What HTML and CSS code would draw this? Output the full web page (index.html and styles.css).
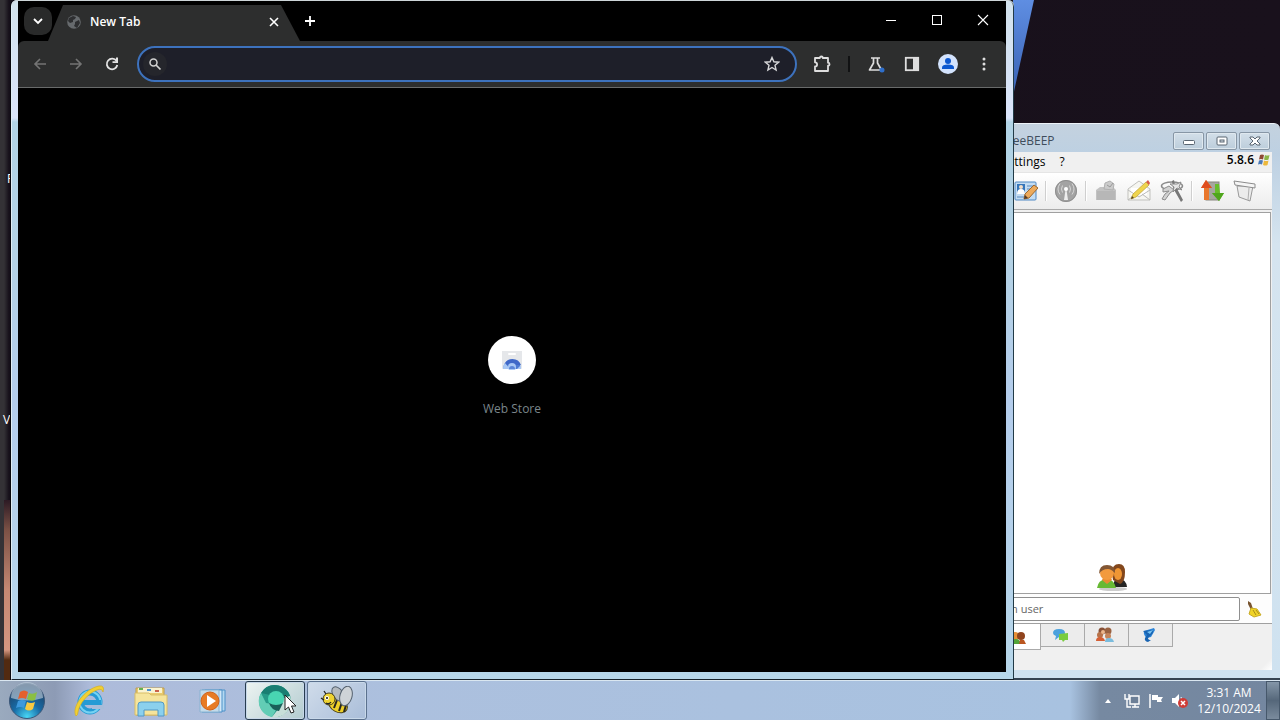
FILE: index.html
```html
<!DOCTYPE html>
<html lang="en">
<head>
<meta charset="utf-8">
<title>Desktop</title>
<link rel="stylesheet" href="styles.css">
</head>
<body>
<main class="desktop">
  <div class="glow-left"></div>
  <div class="glow-right"></div>
  <span class="shortcut shortcut-first">F</span>
  <span class="shortcut shortcut-second">V</span>

  <section class="messenger" aria-label="BeeBEEP">
    <header class="messenger-title">
      <span class="messenger-name">BeeBEEP</span>
      <div class="caption-buttons">
        <button class="caption" aria-label="Minimize"><svg width="14" height="10" viewBox="0 0 14 10"><rect x="1.500" y="4.500" width="11" height="4" rx="1" fill="#fff" stroke="#596571"/></svg></button>
        <button class="caption" aria-label="Maximize"><svg width="14" height="10" viewBox="0 0 14 10"><rect x="2" y="1" width="10" height="8" rx="1" fill="#fff" stroke="#596571"/><rect x="5" y="4" width="4" height="2" fill="#dbe4ec" stroke="#596571"/></svg></button>
        <button class="caption" aria-label="Close"><svg width="14" height="10" viewBox="0 0 14 10"><path d="M2 1h3l2 2 2-2h3v1L9 5l3 3v1H9L7 7 5 9H2V8l3-3-3-3z" fill="#fff" stroke="#596571"/></svg></button>
      </div>
    </header>
    <div class="messenger-body">
      <nav class="menu-bar">
        <button class="menu-item">Settings</button>
        <button class="menu-item">?</button>
        <span class="version">5.8.6</span>
        <svg class="flag" width="12" height="12" viewBox="0 0 12 12"><path d="M2 1q2-1 4 0L5 5.500q-2-1-4 0z" fill="#8e4a35"/><path d="M7 1q2 1 4.500 0l-1 4.500q-2 1-4.500 0z" fill="#8bb548"/><path d="M1 6.500q2-1 4 0l-1 4q-2-1-4 0z" fill="#4b79b8"/><path d="M6 6.500q2 1 4.500 0l-1 4.500q-2 1-4.500 0z" fill="#edb83b"/></svg>
      </nav>
      <div class="tool-bar">
        <button class="tool" aria-label="Edit profile"><svg width="24" height="24" viewBox="0 0 24 24"><rect x="1" y="3" width="21" height="18" rx="1" fill="#c3dcf2" stroke="#4e88c3"/><rect x="3" y="5" width="8" height="10" fill="#3475ba"/><circle cx="7" cy="8" r="2" fill="#f2ddc6"/><path d="M3 15q0-5 4-5t4 5z" fill="#fff"/><path d="M13 7h8M13 10h5M3 18h9" stroke="#5b8bc0"/><path d="M10 20l1-5 9-9 4 3-9 10z" fill="#edaa5b" stroke="#9c6930"/><path d="M10 20l1-4 3 3z" fill="#543b27"/></svg></button>
        <i class="separator"></i>
        <button class="tool" aria-label="Broadcast to network"><svg width="24" height="24" viewBox="0 0 24 24"><circle cx="12" cy="12" r="11" fill="#a3a3a3"/><circle cx="12" cy="12" r="10.500" fill="none" stroke="#8f8f8f"/><path d="M11.500 11h1l1.500 10h-4z" fill="#eee"/><circle cx="12" cy="10" r="2" fill="#fff"/><path d="M8.500 13.500q-2-3.500 0-7M15.500 13.500q2-3.500 0-7M6 15.500q-4-5.500 0-11M18 15.500q4-5.500 0-11" fill="none" stroke="#d6d6d6"/></svg></button>
        <i class="separator"></i>
        <button class="tool" aria-label="Save"><svg width="24" height="24" viewBox="0 0 24 24"><path d="M2 11l4-3h13l3 3v10H2z" fill="#c2c2c2"/><path d="M3 12h18v9H3z" fill="#b7b7b7"/><path d="M10 10l1-6 5-2 4 3-1 6z" fill="#cbcbcb" stroke="#b0b0b0"/><path d="M13 6l3 2 3-4" stroke="#999" fill="none"/></svg></button>
        <button class="tool" aria-label="Write message"><svg width="24" height="24" viewBox="0 0 24 24"><path d="M1 10L12 2l11 8v11H1z" fill="#f6f6f1" stroke="#c1c1bd"/><path d="M4 9h16v7H4z" fill="#fff"/><path d="M1 11l11 7 11-7M1 21l8-6M23 21l-8-6" fill="none" stroke="#bbb"/><path d="M4 20l2-5L19 3l3 3-13 12z" fill="#efd44e" stroke="#bba035" stroke-width=".7"/><path d="M19 3l2-2 2 3-1 2z" fill="#d75a49"/><path d="M4 20l1-3 2 2z" fill="#554328"/></svg></button>
        <button class="tool" aria-label="Tools"><svg width="24" height="24" viewBox="0 0 24 24"><ellipse cx="12" cy="7" rx="10.500" ry="4" fill="none" stroke="#8b8b8b" stroke-width="1.500"/><path d="M12 2l2-1 1 5 8 15-2 2-8-14z" fill="#777"/><path d="M3 10l6-3 5 4-4 3-5 7-3-1 3-5 4-3-6 1z" fill="#d2d2d2" stroke="#8d8d8d"/><path d="M17 5l4-2-2 5 3 3-5-2-4 4 1-5-4-3z" fill="#e5e5e5" stroke="#8b8b8b"/></svg></button>
        <i class="separator"></i>
        <button class="tool" aria-label="File transfers"><svg width="24" height="24" viewBox="0 0 24 24"><rect x="6" y="3" width="13" height="18" fill="#a6a6a0" stroke="#85847c"/><path d="M4 21V9H1l5-8 6 8H9v12z" fill="#e9772c"/><path d="M1 9l5-8 6 8z" fill="#df4d1d"/><path d="M15 5h4l1 9h4l-5 8-7-8h3z" fill="#68bd2b"/><path d="M12 14h12l-5 8z" fill="#4fa51d"/></svg></button>
        <button class="tool" aria-label="Bin"><svg width="24" height="24" viewBox="0 0 24 24"><path d="M4 7l2 11 11 4 3-15z" fill="#ececec" stroke="#999"/><path d="M1 2l21 3v4L2 6z" fill="#f5f5f5" stroke="#8c8c8c"/><path d="M16 9l-1 12" stroke="#b0b0b0"/></svg></button>
      </div>
      <div class="user-list">
        <svg width="32" height="28" viewBox="0 0 32 28"><ellipse cx="17" cy="26" rx="14" ry="2" fill="#ccc"/><path d="M17 24q0-8 6-8 7 0 8 8z" fill="#252525"/><path d="M16 10q0-9 7-9 6 0 6 8 0 10-5 12l-7-4z" fill="#83471c"/><ellipse cx="22" cy="11" rx="4" ry="6" fill="#ef9634"/><path d="M1 25q1-8 9-9 8 0 10 9z" fill="#67b934"/><path d="M6 17l5 4 5-4-2-4H8z" fill="#e88b32"/><circle cx="11" cy="10" r="7" fill="#f29a3e"/><path d="M3 11q0-9 8-9 8 0 8 8-4-4-7-4-6 0-9 5z" fill="#835734"/></svg>
      </div>
      <div class="search-row">
        <input class="user-search" type="text" placeholder="Search user" aria-label="Search user">
        <button class="clear" aria-label="Clear search"><svg width="16" height="18" viewBox="0 0 16 18"><path d="M2 1l3 2 2 6-2 1-3-6z" fill="#78542f"/><path d="M5 8l6 1 4 6-7 2-5-3z" fill="#f0d326" stroke="#c8aa24"/><path d="M7 10l3 5M10 10l3 4" stroke="#a98d18"/></svg></button>
      </div>
      <div class="tabs">
        <button class="side-tab active" aria-label="Users"><svg width="16" height="14" viewBox="0 0 16 14"><circle cx="5" cy="6" r="4" fill="#e79038"/><circle cx="11" cy="6" r="4" fill="#90441d"/><path d="M1 14q1-5 5-5t5 5z" fill="#52a338"/><path d="M9 14l1-4h4l2 4z" fill="#ba5620"/></svg></button>
        <button class="side-tab" aria-label="Chats"><svg width="16" height="14" viewBox="0 0 16 14"><path d="M0 5q0-4 6-4t6 4q0 4-6 4l-4 3 1-4q-3-1-3-3" fill="#4ba1dd"/><path d="M6 6l9-1v7h-3l-2 2-1-2H6z" fill="#79cc40"/></svg></button>
        <button class="side-tab" aria-label="Groups"><svg width="18" height="16" viewBox="0 0 18 16"><circle cx="6" cy="4" r="3.500" fill="#885137"/><circle cx="12" cy="4" r="3.500" fill="#996140"/><circle cx="4" cy="8" r="3" fill="#b7724a"/><circle cx="12" cy="9" r="3" fill="#c5845b"/><circle cx="7" cy="5" r="2" fill="#edb68b"/><path d="M0 14q0-4 4-4t5 4z" fill="#d55f35"/><path d="M9 15q0-4 4-4t5 4z" fill="#7bbcdd"/></svg></button>
        <button class="side-tab" aria-label="Files"><svg width="16" height="16" viewBox="0 0 16 16"><path d="M3 4l10-3 1 2-4 7-4 1q-4-3-3-7" fill="#2c83d6"/><path d="M2 4l9-1q2 2 0 4L7 11q0 2 3 2l-3 2q-4-1-3-4l2-3z" fill="#1964b2"/><path d="M6 5l6-2-3 4z" fill="#77c3f2"/></svg></button>
      </div>
      <div class="grip"></div>
    </div>
  </section>

  <section class="browser" aria-label="New Tab">
    <div class="browser-inner">
      <header class="tab-strip">
        <button class="tab-search" aria-label="Search tabs"><svg width="12" height="12" viewBox="0 0 12 12"><path d="M2 4l4 4 4-4" fill="none" stroke="#fff" stroke-width="1.800"/></svg></button>
        <div class="tab">
          <svg width="14" height="14" viewBox="0 0 14 14"><circle cx="7" cy="7" r="6.800" fill="#666a6d"/><path d="M2 3l4-2 3 1-1 2-2 1v2l-3 1-2-2zM8 7l4-2 1 3-3 5-3-2 1-2z" fill="#2d2e30"/></svg>
          <span class="tab-label">New Tab</span>
          <button class="tab-close" aria-label="Close tab"><svg width="10" height="10" viewBox="0 0 10 10"><path d="M1 1l8 8M9 1L1 9" stroke="#fff" stroke-width="1.600"/></svg></button>
        </div>
        <button class="new-tab" aria-label="New tab"><svg width="12" height="12" viewBox="0 0 12 12"><path d="M6 1v10M1 6h10" stroke="#fff" stroke-width="1.800"/></svg></button>
        <div class="window-buttons">
          <button class="window-button" aria-label="Minimize"><svg width="12" height="12" viewBox="0 0 12 12"><path d="M1 6.500h10" stroke="#fff"/></svg></button>
          <button class="window-button" aria-label="Maximize"><svg width="12" height="12" viewBox="0 0 12 12"><rect x="1.500" y="1.500" width="9" height="9" fill="none" stroke="#fff"/></svg></button>
          <button class="window-button" aria-label="Close"><svg width="12" height="12" viewBox="0 0 12 12"><path d="M1 1l10 10M11 1L1 11" stroke="#fff" stroke-width="1.100"/></svg></button>
        </div>
      </header>
      <div class="browser-bar">
        <button class="nav-button" aria-label="Back"><svg width="16" height="16" viewBox="0 0 16 16"><path d="M14 8H3M8 3L3 8l5 5" fill="none" stroke="#747474" stroke-width="1.600"/></svg></button>
        <button class="nav-button" aria-label="Forward"><svg width="16" height="16" viewBox="0 0 16 16"><path d="M2 8h11M8 3l5 5-5 5" fill="none" stroke="#747474" stroke-width="1.600"/></svg></button>
        <button class="nav-button" aria-label="Reload"><svg width="16" height="16" viewBox="0 0 16 16"><path d="M12.500 5A5.300 5.300 0 1 0 13.300 9" fill="none" stroke="#e3e3e3" stroke-width="1.800"/><path d="M14 1.500V7H8.500V5.300H12V1.500z" fill="#e3e3e3"/></svg></button>
        <div class="omnibox">
          <span class="search-badge"><svg width="14" height="14" viewBox="0 0 14 14"><circle cx="5.500" cy="5.500" r="3.500" fill="none" stroke="#d2d2d2" stroke-width="1.500"/><path d="M8 8l4.500 4.500" stroke="#d2d2d2" stroke-width="1.700"/></svg></span>
          <input class="address" type="text" aria-label="Address and search bar">
          <button class="star" aria-label="Bookmark this tab"><svg width="16" height="16" viewBox="0 0 16 16"><path d="M8 1.500l1.900 4.300 4.700.4-3.600 3.100 1.100 4.700L8 11.500 3.900 14 5 9.300 1.400 6.200l4.700-.4z" fill="none" stroke="#d6d6d8" stroke-width="1.400"/></svg></button>
        </div>
        <button class="nav-button" aria-label="Extensions"><svg width="20" height="20" viewBox="0 0 20 20"><path d="M3 4h4.800a1.500 1.500 0 0 1 3 0H16v4.700a1.500 1.500 0 0 1 0 3V17H3v-4.500a2.100 2.100 0 0 0 0-4.200z" fill="none" stroke="#dedede" stroke-width="1.800" stroke-linejoin="round"/></svg></button>
        <i class="bar-divider"></i>
        <button class="nav-button" aria-label="Experiments"><svg width="20" height="20" viewBox="0 0 20 20"><path d="M5 4h9M7.500 4v5L3.500 16h12L11.500 9V4" fill="none" stroke="#dedede" stroke-width="1.700" stroke-linejoin="round"/><circle cx="16" cy="16" r="2.500" fill="#2f6fcb"/></svg></button>
        <button class="nav-button" aria-label="Side panel"><svg width="16" height="16" viewBox="0 0 16 16"><rect x="1.800" y="1.800" width="12.400" height="12.400" fill="none" stroke="#dedede" stroke-width="1.800"/><path d="M9 2h5v12H9z" fill="#dedede"/></svg></button>
        <button class="nav-button" aria-label="Profile"><svg width="20" height="20" viewBox="0 0 20 20"><circle cx="10" cy="10" r="10" fill="#d3e3fd"/><circle cx="10" cy="7" r="3" fill="#0b57d0"/><path d="M4 15v-1.500q0-3 6-3t6 3V15z" fill="#0b57d0"/></svg></button>
        <button class="nav-button" aria-label="More"><svg width="4" height="16" viewBox="0 0 4 16"><circle cx="2" cy="3" r="1.500" fill="#dedede"/><circle cx="2" cy="8" r="1.500" fill="#dedede"/><circle cx="2" cy="13" r="1.500" fill="#dedede"/></svg></button>
      </div>
      <div class="page">
        <a class="shortcut-tile" href="#">
          <span class="tile-icon"><svg width="22" height="20" viewBox="0 0 22 20"><path d="M1 1h20v17q0 1-1 1H2q-1 0-1-1z" fill="#e5e7ea"/><rect x="7" y="3" width="8" height="2" rx="1" fill="#fff"/><path d="M2 19a9 9 0 0 1 18 0z" fill="#4c79d2"/><path d="M3 15a9 9 0 0 1 17 0h-9z" fill="#3f68c8"/><path d="M2 19q0-4 2-6l5 6z" fill="#a9c8f4"/><path d="M16 19l4-4v4z" fill="#a9c8f4"/><circle cx="11" cy="17" r="4" fill="#a9c8f4"/><path d="M8 19a3 3 0 1 1 6 0z" fill="#5b85d8"/></svg></span>
          <span class="tile-label">Web Store</span>
        </a>
      </div>
    </div>
  </section>
</main>

<footer class="taskbar">
  <button class="start" aria-label="Start"><svg width="38" height="38" viewBox="0 0 38 38"><defs><radialGradient id="orb" cx=".5" cy=".95" r=".9"><stop offset="0" stop-color="#49d7f5"/><stop offset=".45" stop-color="#176ba6"/><stop offset="1" stop-color="#203e61"/></radialGradient></defs><circle cx="19" cy="19" r="17.500" fill="url(#orb)" stroke="#3b5778"/><path d="M3 16a16 16 0 0 1 32 0q-16 5-32 0" fill="#bccbd8" opacity=".65"/><path d="M12 10q4-3 8 0l-2 7q-4-2-8 0z" fill="#e4602e"/><path d="M21 11q4 2 8-1l-2 8q-4 2-8-1z" fill="#8abf44"/><path d="M10 19q4-2 8 0l-2 7q-4-2-8 0z" fill="#3e99dc"/><path d="M19 20q4 2 8 0l-2 7q-4 3-8 0z" fill="#f7c941"/></svg></button>
  <nav class="pinned">
    <button class="task" aria-label="Internet Explorer"><svg width="34" height="34" viewBox="0 0 34 34"><circle cx="18" cy="18" r="9.500" fill="none" stroke="#269bd5" stroke-width="6"/><circle cx="18" cy="18" r="10.500" fill="none" stroke="#76d2f2" stroke-width="2"/><path d="M9 16h20v5H9z" fill="#269bd5"/><path d="M20 21h12v4H20z" fill="#a8bcd9"/><path d="M4 32C-1 24 12 5 27 2q6-1 4 6-1-4-6-2C16 9 7 20 6 28q0 3-2 4" fill="#f1d033" stroke="#d2ad22" stroke-width=".7"/></svg></button>
    <button class="task" aria-label="Windows Explorer"><svg width="34" height="32" viewBox="0 0 34 32"><path d="M2 3h28v27H2z" fill="#eacb6e" stroke="#be9d4e"/><path d="M4 3h24v5H4z" fill="#faf3cf"/><path d="M5 3h4v2H5z" fill="#63b151"/><path d="M13 4h4v2h-4z" fill="#4d93d2"/><path d="M21 5h4v2h-4z" fill="#ca624c"/><path d="M1 8h14l2 2h16v20H1z" fill="#f5e49c" stroke="#d9bd67"/><path d="M4 31V20q0-3 3-3h20q3 0 3 3v11h-6v-6H10v6z" fill="#8bd0ed" stroke="#5098c6"/></svg></button>
    <button class="task" aria-label="Media Player"><svg width="28" height="26" viewBox="0 0 28 26"><path d="M6 2h20v21H6z" fill="#b4d8f1" stroke="#4d91c8"/><path d="M3 2h20v22H3z" fill="#d3e8f7" stroke="#4d91c8"/><path d="M1 2h19v22H1z" fill="#c4dbea" stroke="#88b3d2"/><circle cx="11" cy="13" r="9" fill="#e77b24" stroke="#d26218"/><path d="M8 7l9 6-9 6z" fill="#fff"/></svg></button>
    <button class="task running current" aria-label="Chromium"><svg width="34" height="34" viewBox="0 0 34 34"><circle cx="17" cy="17" r="16" fill="#269a88"/><path d="M3 9A16 16 0 0 1 32 12H17z" fill="#197e72"/><path d="M3 9a16 16 0 0 0 11 24l7-12-13-2z" fill="#62cdb5"/><path d="M14 33a16 16 0 0 0 18-21l-9 3-2 9z" fill="#c7dfd9"/><circle cx="18" cy="15" r="8" fill="#48d5b2"/><path d="M11 19q7 4 14 0l-4 8q-8-1-10-8" fill="#195f59"/></svg></button>
    <button class="task running" aria-label="BeeBEEP"><svg width="34" height="30" viewBox="0 0 34 30"><ellipse cx="18" cy="19" rx="10" ry="7" transform="rotate(28 18 19)" fill="#edcf29" stroke="#47401d"/><path d="M17 14l-3 8M22 16l-3 9M26 19l-2 7" stroke="#272620" stroke-width="2"/><ellipse cx="18" cy="8" rx="5" ry="8" transform="rotate(-35 18 8)" fill="#b4babf" stroke="#53606e"/><ellipse cx="26" cy="10" rx="6" ry="10" transform="rotate(15 26 10)" fill="#ced3d7" stroke="#53606e"/><circle cx="9" cy="13" r="6" fill="#efd331" stroke="#47401d"/><circle cx="7" cy="12" r="2" fill="#fff"/><circle cx="7" cy="12" r="1" fill="#111"/><path d="M6 8L4 5M4 14l-3-2M6 17q3 2 5-1" fill="none" stroke="#222" stroke-width="1.300"/></svg></button>
  </nav>
  <div class="tray">
    <button class="tray-button" aria-label="Show hidden icons"><svg width="8" height="6" viewBox="0 0 8 6"><path d="M4 1l3 4H1z" fill="#fff"/></svg></button>
    <button class="tray-button" aria-label="Network"><svg width="17" height="16" viewBox="0 0 17 16"><path d="M6 3h9v8H6zM8 14h7M11 11v3" fill="#6c7f97" stroke="#fff" stroke-width="1.400"/><path d="M1 1v5h4V1M3 6v8h4" fill="none" stroke="#fff" stroke-width="1.400"/></svg></button>
    <button class="tray-button" aria-label="Action Center"><svg width="16" height="16" viewBox="0 0 16 16"><path d="M2 1v14" stroke="#fff" stroke-width="1.500"/><path d="M4 2h6v2h5l-2 3 1 2H9V7H4z" fill="#fff"/></svg></button>
    <button class="tray-button" aria-label="Volume muted"><svg width="18" height="16" viewBox="0 0 18 16"><path d="M1 5h3l4-4v13l-4-4H1z" fill="#fff"/><path d="M10 4q2 3 0 7" fill="none" stroke="#fff"/><circle cx="12" cy="10" r="5" fill="#cf3c37"/><path d="M10 8l4 4M14 8l-4 4" stroke="#fff" stroke-width="1.500"/></svg></button>
    <time class="clock"><span>3:31 AM</span><span>12/10/2024</span></time>
    <button class="show-desktop" aria-label="Show desktop"></button>
  </div>
</footer>
<svg class="pointer" width="13" height="20" viewBox="0 0 13 20"><path d="M1 1v15l3.500-3L7 19l3-1-2.500-6H12z" fill="#fff" stroke="#222"/></svg>
</body>
</html>
```
FILE: styles.css
```css
* { box-sizing: border-box; }
body {
  margin: 0;
  height: 100vh;
  display: flex;
  flex-direction: column;
  overflow: hidden;
  font-family: "Open Sans", "Noto Sans", sans-serif;
  font-size: 12px;
  line-height: 16px;
}
button, input {
  margin: 0;
  padding: 0;
  border: 0;
  background: none;
  color: inherit;
  font: inherit;
}
button { display: flex; align-items: center; justify-content: center; }
svg { display: block; flex: none; }

.desktop {
  position: relative;
  flex: 1;
  overflow: hidden;
  background: linear-gradient(90deg, #343236 4px, #16101a 9px, #19111c);
}
.glow-left {
  position: absolute;
  left: 4px;
  top: 500px;
  bottom: 0;
  width: 7px;
  background: linear-gradient(#2c1a24, #7b5145 30px, #c58873 90px, #d49680 150px, #522a10 160px);
}
.glow-right {
  position: absolute;
  right: 246px;
  top: 0;
  width: 21px;
  height: 96px;
  background: linear-gradient(#5f8ee2, #3861b4);
  clip-path: polygon(0 0, 100% 0, 0 100%);
}
.shortcut { position: absolute; color: #fff; }
.shortcut-first { left: 7px; top: 171px; }
.shortcut-second { left: 3px; top: 412px; }

/* Messenger window */
.messenger {
  position: absolute;
  top: 123px;
  right: 0;
  bottom: 0;
  width: 312px;
  padding: 0 8px 8px;
  display: flex;
  flex-direction: column;
  border-top: 1px solid #edf3f8;
  border-bottom: 2px solid #354351;
  border-radius: 6px 6px 0 0;
  background: linear-gradient(#c4d2df, #bdd0e2 30px, #d5e4ef 120px, #cfe2f0);
}
.messenger-title {
  height: 28px;
  display: flex;
  justify-content: space-between;
  padding-left: 29px;
  color: #404d5c;
}
.messenger-name { padding-top: 9px; }
.caption-buttons { display: flex; gap: 2px; padding: 8px 2px 2px 0; }
.caption {
  width: 31px;
  height: 18px;
  border: 1px solid #8796a5;
  border-radius: 2px;
  background: linear-gradient(#d3dfe9, #bccddb);
  box-shadow: inset 0 0 0 1px #dfe8ef;
}
.messenger-body {
  flex: 1;
  display: flex;
  flex-direction: column;
  background: #f0f0f0;
}
.menu-bar { height: 20px; display: flex; align-items: center; padding: 0 2px 0 18px; color: #000; }
.menu-item { padding: 0 7px; }
.version { margin-left: auto; padding-bottom: 4px; font-weight: 600; }
.flag { margin: 0 0 4px 4px; }
.tool-bar {
  height: 38px;
  display: flex;
  align-items: center;
  justify-content: flex-end;
  gap: 5px;
  padding: 0 13px 0 0;
  border-top: 1px solid #e5e5e5;
  border-bottom: 1px solid #a9a9a9;
  background: linear-gradient(#fff, #ececec);
}
.tool { width: 28px; height: 28px; }
.separator { width: 2px; height: 20px; border-left: 1px solid #cfcfcf; background: #fff; }
.user-list {
  flex: 1;
  margin: 2px 1px 0 0;
  display: flex;
  align-items: flex-end;
  justify-content: center;
  padding: 0 24px 2px 0;
  border: 1px solid #a0a0a0;
  background: #fff;
}
.search-row {
  height: 30px;
  display: flex;
  align-items: center;
  gap: 5px;
  padding: 0 9px 0 2px;
  background: #fdfdfd;
  border-bottom: 1px solid #a0a0a0;
}
.user-search {
  flex: 1;
  min-width: 0;
  height: 24px;
  padding: 0 4px;
  border: 1px solid #8f8f8f;
  border-radius: 2px;
  background: #fff;
  font-size: 11px;
}
.user-search::placeholder { color: #666; opacity: 1; }
.clear { width: 18px; height: 24px; }
.tabs { height: 26px; display: flex; align-items: flex-start; padding-left: 21px; }
.side-tab {
  width: 44px;
  height: 23px;
  padding-right: 4px;
  border: solid #aaa;
  border-width: 0 1px 1px 0;
  background: #ececec;
}
.side-tab.active { height: 26px; padding-right: 2px; background: #fff; }
.grip { height: 20px; background: linear-gradient(135deg, #f0f0f0 96%, #fff); }

/* Browser window */
.browser {
  position: absolute;
  top: 0;
  bottom: 0;
  left: 11px;
  right: 266px;
  padding: 1px 8px 7px 6px;
  display: flex;
  border: solid #dfedf5;
  border-width: 0 0 0 1px;
  border-radius: 6px 6px 0 0;
  border-bottom: 1px solid #18232c;
  box-shadow: inset 0 1px #cdd5d8, inset -1px 0 #223b47, -1px 0 #08080d;
  background: linear-gradient(#d2e2ec, #dbe5fb 118px, #b2d4e6 122px, #b4d2e5 260px, #b4cdec 400px, #b7d7ea);
}
.browser-inner { flex: 1; display: flex; flex-direction: column; background: #000; }
.tab-strip { height: 40px; display: flex; align-items: flex-end; padding-left: 6px; }
.tab-search { width: 28px; height: 28px; margin-bottom: 6px; border-radius: 10px; background: #292a2a; }
.tab {
  width: 252px;
  height: 36px;
  margin-left: -4px;
  display: flex;
  align-items: center;
  gap: 9px;
  padding: 0 19px 3px;
  background: #2d2e2e;
  clip-path: polygon(15px 0, 233px 0, 100% 100%, 0 100%);
  color: #fff;
  font-weight: 600;
}
.tab-label { flex: 1; }
.tab-close { width: 14px; height: 16px; }
.new-tab { width: 28px; height: 28px; margin: 0 0 6px -4px; }
.window-buttons { display: flex; margin-left: auto; align-self: stretch; }
.window-button { width: 46px; height: 38px; }
.browser-bar {
  height: 47px;
  display: flex;
  align-items: center;
  padding: 0 4px;
  border-bottom: 1px solid #696b6b;
  border-radius: 6px 6px 0 0;
  background: #2d2e2e;
}
.nav-button { width: 36px; height: 36px; }
.omnibox {
  flex: 1;
  height: 36px;
  margin: 0 7px;
  display: flex;
  align-items: center;
  padding: 0 14px 0 4px;
  border: 2px solid #3d72bd;
  border-radius: 18px;
  background: #1e1f29;
}
.search-badge {
  width: 24px;
  height: 24px;
  display: flex;
  align-items: center;
  justify-content: center;
  border-radius: 12px;
  background: #25262c;
}
.address { flex: 1; min-width: 0; height: 28px; color: #fff; outline: none; }
.star { width: 18px; height: 24px; }
.bar-divider { width: 2px; height: 16px; margin: 0 8px; background: #111213; }
.page { flex: 1; display: flex; align-items: center; justify-content: center; padding-bottom: 8px; }
.shortcut-tile {
  display: flex;
  flex-direction: column;
  align-items: center;
  gap: 17px;
  color: #7b868b;
  text-decoration: none;
}
.tile-icon {
  width: 48px;
  height: 48px;
  display: flex;
  align-items: center;
  justify-content: center;
  border-radius: 50%;
  background: #fff;
}

/* Taskbar */
.taskbar {
  height: 40px;
  display: flex;
  border-top: 1px solid #dae7f1;
  background: linear-gradient(90deg, #9aaabe, #8d9bb5 55px, #adbbda 90px, #acc0de 400px, #a8c2e0 1070px, #7689a1 1100px, #7487a0);
}
.start { width: 54px; }
.pinned { display: flex; gap: 2px; padding-left: 5px; }
.task { width: 60px; }
.running {
  border: 1px solid #5b718e;
  border-radius: 3px;
  background: linear-gradient(135deg, #d0dcea, #a9bdd9);
  box-shadow: inset 0 0 0 1px #c8d8e9;
}
.current { border-color: #283d50; background: linear-gradient(135deg, #edf4f2, #b3cbd0); }
.tray { margin-left: auto; display: flex; color: #fff; }
.tray-button { width: 24px; }
.clock {
  width: 74px;
  display: flex;
  flex-direction: column;
  align-items: center;
  justify-content: center;
}
.show-desktop {
  width: 14px;
  border: 1px solid #46586b;
  background: linear-gradient(#8496a8, #55677a 50%, #7a8b9d);
}
.pointer { position: absolute; left: 284px; top: 694px; }
```
